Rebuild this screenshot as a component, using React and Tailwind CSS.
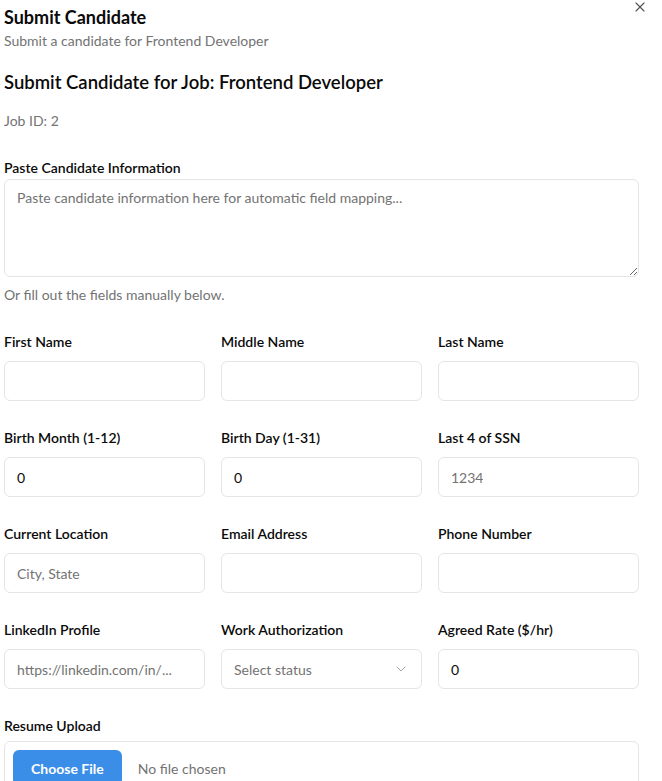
import React from "react";
import { X, ChevronDown } from "lucide-react";

const Field = ({ label, children }) => (
  <div className="flex flex-col">
    <label className="text-[14px] leading-[20px] font-semibold text-[#0a0a0a]">{label}</label>
    <div className="mt-[9px]">{children}</div>
  </div>
);

const Input = ({ value, placeholder }) => (
  <div className="h-[40px] w-full rounded-md border border-[#e5e5e5] bg-white px-3 flex items-center text-[14px]">
    {value !== undefined ? (
      <span className="text-[#0a0a0a]">{value}</span>
    ) : placeholder ? (
      <span className="text-[#737373] truncate">{placeholder}</span>
    ) : null}
  </div>
);

export default function App() {
  return (
    <div
      className="relative bg-white pl-[4px] pr-[23px] pt-[3px] text-[#0a0a0a]"
      style={{ fontFamily: "Lato, 'Noto Sans', sans-serif" }}
    >
      <X className="absolute right-[14px] top-[-1px] w-4 h-4 text-[#555]" strokeWidth={1.75} />
      <h1 className="text-[18px] leading-[28px] font-bold">Submit Candidate</h1>
      <p className="text-[14px] leading-[20px] text-[#737373]">Submit a candidate for Frontend Developer</p>
      <h2 className="mt-[17px] text-[18.5px] leading-[28px] font-semibold">Submit Candidate for Job: Frontend Developer</h2>
      <p className="mt-[15px] text-[14px] leading-[20px] text-[#737373]">Job ID: 2</p>

      <label className="mt-[27px] block text-[14px] leading-[20px] font-semibold">Paste Candidate Information</label>
      <textarea
        className="mt-[1px] block w-full h-[98px] rounded-md border border-[#e5e5e5] px-3 py-[8px] text-[14px] leading-[20px] placeholder:text-[#737373] outline-none"
        placeholder="Paste candidate information here for automatic field mapping..."
        style={{ fontFamily: "inherit" }}
      />
      <p className="mt-[8px] text-[14px] leading-[20px] text-[#737373]">Or fill out the fields manually below.</p>

      <div className="mt-[27px] grid grid-cols-3 gap-x-4 gap-y-[27px]">
        <Field label="First Name"><Input /></Field>
        <Field label="Middle Name"><Input /></Field>
        <Field label="Last Name"><Input /></Field>
        <Field label="Birth Month (1-12)"><Input value="0" /></Field>
        <Field label="Birth Day (1-31)"><Input value="0" /></Field>
        <Field label="Last 4 of SSN"><Input placeholder="1234" /></Field>
        <Field label="Current Location"><Input placeholder="City, State" /></Field>
        <Field label="Email Address"><Input /></Field>
        <Field label="Phone Number"><Input /></Field>
        <Field label="LinkedIn Profile"><Input placeholder="https://linkedin.com/in/..." /></Field>
        <Field label="Work Authorization">
          <div className="h-[40px] w-full rounded-md border border-[#e5e5e5] bg-white px-3 flex items-center justify-between text-[14px]">
            <span className="text-[#737373]">Select status</span>
            <ChevronDown className="w-4 h-4 text-[#a3a3a3]" strokeWidth={1.5} />
          </div>
        </Field>
        <Field label="Agreed Rate ($/hr)"><Input value="0" /></Field>
      </div>

      <label className="mt-[27px] block text-[14px] leading-[20px] font-semibold">Resume Upload</label>
      <div className="mt-[5px] w-full rounded-md border border-[#e5e5e5] pl-[8px] pt-[8px] pb-[8px] flex items-center">
        <div className="h-[36px] px-[18px] rounded-md bg-[#3b8ee8] text-white text-[14px] font-bold flex items-center">Choose File</div>
        <span className="ml-4 text-[14px] text-[#737373]">No file chosen</span>
      </div>
      <div className="h-6" />
    </div>
  );
}
